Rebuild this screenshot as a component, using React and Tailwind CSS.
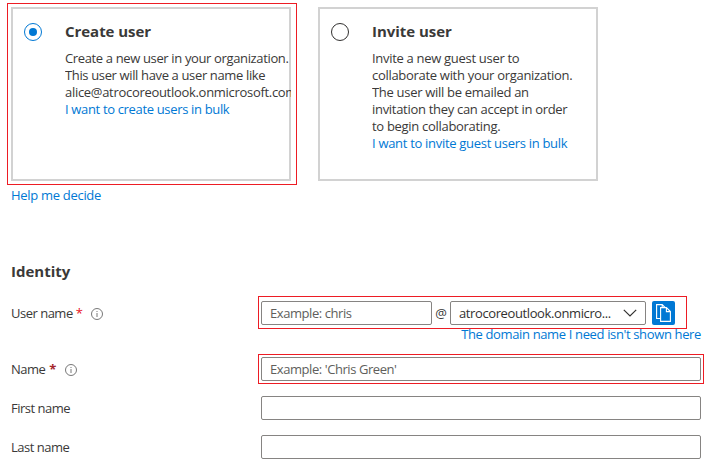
import React from "react";

function Info() {
  return (
    <svg className="mt-[2px] size-3 shrink-0" viewBox="0 0 12 12" fill="none" stroke="#555" strokeWidth="0.8">
      <circle cx="6" cy="6" r="5.5" />
      <path d="M6 5v4M6 3v1" />
    </svg>
  );
}

function Outline({ className }) {
  return <div className={"pointer-events-none absolute border border-[#ed1c24] " + className} />;
}

function Option({ title, selected, children }) {
  return (
    <div className="relative flex h-[174px] w-[280px] border-2 border-[#d2d2d2] pt-[14px] pl-[11px]">
      <div
        className={
          "flex size-[18px] shrink-0 items-center justify-center rounded-full border " +
          (selected ? "border-[#0078d4]" : "border-[#323130]")
        }
      >
        {selected && <div className="size-2 rounded-full bg-[#0078d4]" />}
      </div>
      <div className="-mr-[2px] ml-[23px] w-[226px] shrink-0">
        <h3 className="-mt-px h-[28px] text-[15px] leading-[18px] font-bold tracking-[-0.04px]">{title}</h3>
        <div className="relative overflow-hidden leading-[17px] whitespace-nowrap">{children}</div>
      </div>
    </div>
  );
}

const input =
  "h-6 rounded-xs border border-[#868482] bg-white px-2 text-[13px] tracking-[-0.43px] text-[#323130] outline-none placeholder:text-[#605e5c]";

function Row({ label, star, info, className, children }) {
  return (
    <div className={"flex h-6 items-center " + className}>
      <div className="flex w-[250px] shrink-0 items-center">
        <span className="tracking-[-0.5px]">{label}</span>
        {star && <span className={star}>*</span>}
        {info && <span className={info}><Info /></span>}
      </div>
      {children}
    </div>
  );
}

export default function App() {
  return (
    <main className="relative h-[468px] w-[709px] overflow-hidden bg-white pt-[7px] pl-[11px] font-['Open_Sans',sans-serif] text-[13px] leading-[18px] tracking-[-0.3px] text-[#3a3938]">
      <div className="flex gap-[27px]">
        <Option title="Create user" selected>
          <p className="tracking-[-0.36px]">Create a new user in your organization.</p>
          <p className="tracking-[-0.36px]">This user will have a user name like</p>
          <p>alice@atrocoreoutlook.onmicrosoft.com</p>
          <a className="block tracking-[-0.34px] text-[#0078d4]">I want to create users in bulk</a>
        </Option>
        <Option title="Invite user">
          <p>Invite a new guest user to</p>
          <p>collaborate with your organization.</p>
          <p>The user will be emailed an</p>
          <p>invitation they can accept in order</p>
          <p>to begin collaborating.</p>
          <a className="block text-[#0078d4]">I want to invite guest users in bulk</a>
        </Option>
      </div>
      <a className="mt-[5px] block w-fit text-[#0078d4]">Help me decide</a>
      <h2 className="mt-[57px] text-[15px] leading-[20px] font-bold tracking-normal">Identity</h2>
      <Row className="mt-[20px]" label="User name" star="ml-[3px] text-[#e81123]" info="ml-[8px]">
        <input className={input + " w-[171px]"} placeholder="Example: chris" />
        <span className="w-[18px] text-center">@</span>
        <div className={input + " flex w-[196px] items-center justify-between"}>
          <span className="tracking-[-0.39px]">atrocoreoutlook.onmicro...</span>
          <svg className="h-2 w-[14px]" viewBox="0 0 14 8" fill="none" stroke="#323130" strokeWidth="1.2">
            <path d="M.8.8 7 7 13.2.8" />
          </svg>
        </div>
        <button className="ml-[6px] flex h-6 w-[23px] items-center justify-center rounded-xs bg-[#0078d4]">
          <svg className="h-[18px] w-[15px]" viewBox="0 0 15 18" fill="none" stroke="white" strokeWidth="1.1">
            <path d="M4.5 14.5H.6V.6h5.6L9 3.4M6.2.6v2.8" />
            <path d="M4.6 3.6h5.8l4 4v9.8H4.6zM10.4 3.6v4h4" />
          </svg>
        </button>
      </Row>
      <a className="block w-[690px] text-right tracking-[-0.36px] text-[#0078d4]">The domain name I need isn't shown here</a>
      <Row className="mt-[14px]" label="Name" star="ml-1 text-[#a4262c] font-bold" info="ml-[9px]">
        <input className={input + " w-[440px]"} placeholder="Example: 'Chris Green'" />
      </Row>
      <Row className="mt-[15px]" label="First name">
        <input className={input + " w-[440px]"} />
      </Row>
      <Row className="mt-[15px]" label="Last name">
        <input className={input + " w-[440px]"} />
      </Row>
      <Outline className="top-[3px] left-[7px] h-[182px] w-[290px]" />
      <Outline className="top-[296px] left-[258px] h-[33px] w-[429px]" />
      <Outline className="top-[354px] left-[258px] h-[30px] w-[446px]" />
    </main>
  );
}
